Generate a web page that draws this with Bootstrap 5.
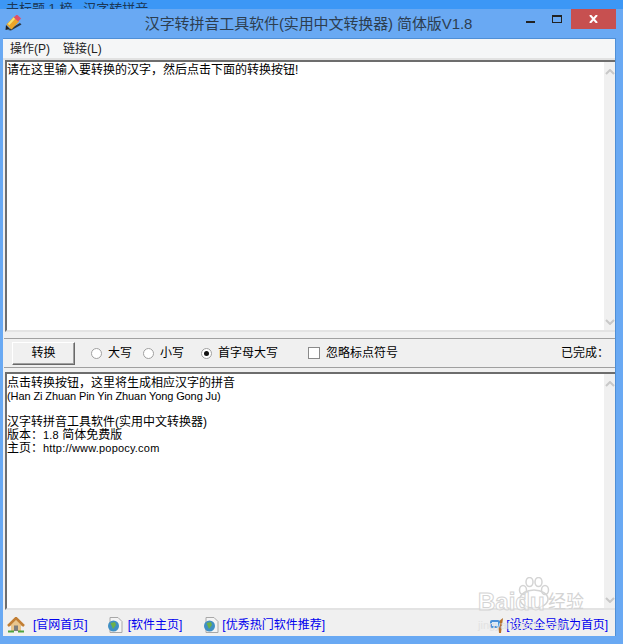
<!DOCTYPE html>
<html lang="zh-CN">
<head>
  <meta charset="UTF-8">
  <meta name="viewport" content="width=device-width, initial-scale=1.0">
  <title>汉字转拼音工具软件</title>
  <link href="https://cdn.jsdelivr.net/npm/bootstrap@5.3.2/dist/css/bootstrap.min.css" rel="stylesheet">
  <script defer src="https://cdn.jsdelivr.net/npm/bootstrap@5.3.2/dist/js/bootstrap.bundle.min.js"></script>
  <style>
    html, body { height: 100%; margin: 0; overflow: hidden; }
    body { background: #69a9f3; font-family: "Liberation Sans", "Noto Sans CJK SC", sans-serif; font-size: 12px; line-height: 13px; color: #000; }
    .app-frame { width: 623px; height: 644px; }
    .behind-strip { height: 9px; background: #3c97f6; overflow: hidden; font-size: 13px; line-height: 17px; color: #1c3857; padding-left: 6px; white-space: nowrap; }
    .title-row { height: 29px; position: relative; padding-right: 6px; }
    .title-text { font-size: 15px; letter-spacing: -.1px; color: #2d3e50; line-height: 29px; }
    .app-icon { position: absolute; left: 5px; top: 6px; }
    .win-btns { position: absolute; right: 7px; top: 0; height: 20px; }
    .close-btn { width: 45px; height: 20px; background: #c75050; }
    .ctl-btn { width: 27px; height: 20px; }
    .client-area { margin: 0 7px 0 3px; height: 598px; background: #f0f0f0; border-top: 1px solid #4f8fd6; border-right: 1px solid #4f8fd6; }
    .menu-row { height: 21px; background: #f5f6f7; padding-left: 7px; gap: 13px; line-height: 20px; color: #222; border-bottom: 2px solid #e2e2e2; }
    .edit-box { position: relative; background: #fff; margin-left: 2px; border-top: 2px solid #6d6d6d; border-left: 2px solid #6d6d6d; border-bottom: 2px solid #e3e3e3; overflow: hidden; }
    .edit-top { height: 272px; padding-top: 2px; }
    .edit-bottom { height: 238px; padding-top: 3px; }
    .latin-tight { font-size: 11px; letter-spacing: -.1px; }
    .latin-wide { font-size: 11px; letter-spacing: .2px; }
    .scroll-track { position: absolute; right: 0; top: 0; bottom: 0; width: 11px; background: #f0f0f0; }
    .scroll-arrow { position: absolute; right: 0; width: 10px; height: 6px; }
    .convert-bar { height: 30px; margin: 6px 0 4px 1px; border-top: 1px solid #a0a0a0; border-bottom: 1px solid #a0a0a0; padding: 0 6px 0 8px; }
    .convert-btn { width: 63px; height: 23px; background: #f0f0f0; border: 1px solid; border-color: #fff #696969 #696969 #fff; box-shadow: inset -1px -1px 0 #a0a0a0; text-align: center; line-height: 20px; padding: 0; color: #000; font-size: 12px; margin-right: 16px; }
    .radio-dot { width: 11px; height: 11px; border-radius: 50%; background: #fff; border: 1px solid #a0a0a0; margin-right: 6px; position: relative; flex: none; }
    .radio-dot.is-on::after { content: ""; position: absolute; left: 2px; top: 2px; width: 5px; height: 5px; border-radius: 50%; background: #111; }
    .check-box { width: 12px; height: 12px; background: #fff; border: 1px solid #8a8a8a; margin-right: 6px; flex: none; }
    .gap-a { margin-right: 11px; }
    .gap-b { margin-right: 17px; }
    .gap-c { margin-right: 30px; }
    .foot-row { height: 26px; background: #f0f0f0; padding: 4px 0 0 4px; }
    .foot-link { color: #0000ee; text-decoration: none; font-size: 12px; }
    .house-icon { margin-right: 8px; }
    .globe-one { margin-left: 19px; margin-right: 5px; }
    .globe-two { margin-left: 21px; margin-right: 3px; }
    .nav-icon { margin-left: auto; margin-right: 2px; }
    .foot-last { margin-right: 7px; letter-spacing: -.1px; }
    .watermark { position: absolute; left: 478px; top: 571px; width: 130px; height: 62px; pointer-events: none; color: #d6d6d6; }
    .wm-paw { position: absolute; left: 40px; top: 6px; }
    .wm-word { position: absolute; left: 0; top: 16px; font-size: 24px; line-height: 30px; font-weight: 700; color: rgba(255,255,255,.6); -webkit-text-stroke: 1px #d4d4d4; white-space: nowrap; }
    .wm-cn { position: absolute; left: 70px; top: 20px; font-size: 18px; line-height: 22px; color: #d4d4d4; white-space: nowrap; }
    .wm-url { position: absolute; left: 0; top: 48px; font-size: 11px; line-height: 12px; color: #e2e2e2; white-space: nowrap; }
  </style>
</head>
<body>
  <div class="app-frame position-relative">
    <div class="behind-strip">未标题 1.榜 &nbsp; 汉字转拼音</div>
    <div class="title-row d-flex align-items-center justify-content-center">
      <svg class="app-icon" width="17" height="16" viewBox="0 0 17 16">
        <path d="M3 15 L15 8 L16.5 9.5 L6 15.5 Z" fill="#1a1a1a" opacity=".8"/>
        <path d="M4 12 L11.5 4" stroke="#eda52a" stroke-width="7"/>
        <path d="M3.5 9.5 L9.5 3" stroke="#f8e070" stroke-width="2"/>
        <path d="M11 4.5 L14 1.5" stroke="#e0506a" stroke-width="6"/>
        <path d="M1 10 L5 14 L.5 15 Z" fill="#222"/>
      </svg>
      <span class="title-text">汉字转拼音工具软件(实用中文转换器) 简体版V1.8</span>
      <div class="win-btns d-flex">
        <div class="ctl-btn d-flex align-items-center justify-content-center">
          <svg width="9" height="9" viewBox="0 0 9 9"><rect y="6" width="9" height="2" fill="#222"/></svg>
        </div>
        <div class="ctl-btn d-flex align-items-center justify-content-center">
          <svg width="11" height="9" viewBox="0 0 11 9"><rect x=".5" y=".5" width="9" height="7" fill="none" stroke="#222"/><rect width="10" height="2" fill="#222"/></svg>
        </div>
        <div class="close-btn d-flex align-items-center justify-content-center">
          <svg width="9" height="8" viewBox="0 0 9 8"><path d="M1 0 L8 8 M8 0 L1 8" stroke="#fff" stroke-width="2"/></svg>
        </div>
      </div>
    </div>

    <div class="client-area d-flex flex-column">
      <div class="menu-row d-flex"><span>操作(P)</span><span>链接(L)</span></div>

      <div class="edit-box edit-top">
        请在这里输入要转换的汉字，然后点击下面的转换按钮!
        <div class="scroll-track">
          <svg class="scroll-arrow" style="top:7px" viewBox="0 0 10 6"><path d="M1 5 L5 1 L9 5" fill="none" stroke="#c8c8c8" stroke-width="2"/></svg>
          <svg class="scroll-arrow" style="bottom:5px" viewBox="0 0 10 6"><path d="M1 1 L5 5 L9 1" fill="none" stroke="#c8c8c8" stroke-width="2"/></svg>
        </div>
      </div>

      <div class="convert-bar d-flex align-items-center">
        <button type="button" class="convert-btn">转换</button>
        <span class="radio-dot"></span><span class="gap-a">大写</span>
        <span class="radio-dot"></span><span class="gap-b">小写</span>
        <span class="radio-dot is-on"></span><span class="gap-c">首字母大写</span>
        <span class="check-box"></span><span>忽略标点符号</span>
        <span class="ms-auto">已完成：</span>
      </div>

      <div class="edit-box edit-bottom">
        点击转换按钮，这里将生成相应汉字的拼音<br>
        <span class="latin-tight">(Han Zi Zhuan Pin Yin Zhuan Yong Gong Ju)</span><br><br>
        汉字转拼音工具软件(实用中文转换器)<br>
        版本：<span class="latin-wide">1.8</span> 简体免费版<br>
        主页：<span class="latin-wide">http://www.popocy.com</span>
        <div class="scroll-track">
          <svg class="scroll-arrow" style="top:7px" viewBox="0 0 10 6"><path d="M1 5 L5 1 L9 5" fill="none" stroke="#c8c8c8" stroke-width="2"/></svg>
          <svg class="scroll-arrow" style="bottom:5px" viewBox="0 0 10 6"><path d="M1 1 L5 5 L9 1" fill="none" stroke="#c8c8c8" stroke-width="2"/></svg>
        </div>
      </div>

      <div class="foot-row d-flex align-items-center">
        <svg class="house-icon" width="18" height="16" viewBox="0 0 18 16">
          <path d="M9 1 L17 9 H14 V14 H4 V9 H1 Z" fill="#e9c58d"/>
          <path d="M1 9 L9 1 L17 9" fill="none" stroke="#c27f35" stroke-width="2.5"/>
          <rect x="7" y="8.5" width="4" height="5.5" fill="#7d7d7d"/>
          <rect x="1" y="13.5" width="6" height="2" fill="#4fa33f"/>
          <rect x="11" y="13.5" width="6" height="2" fill="#4fa33f"/>
        </svg>
        <a class="foot-link" href="#">[官网首页]</a>
        <svg class="globe-one" width="16" height="16" viewBox="0 0 16 16">
          <path d="M3 .5 H11 L15 4.5 V15.5 H3 Z" fill="#f4f4f4" stroke="#a8a8a8"/>
          <circle cx="6.5" cy="9" r="5.5" fill="#3f8fc4"/>
          <path d="M3.5 6 L8 5 L9 8 L6 12 Z" fill="#6cb04a"/>
        </svg>
        <a class="foot-link" href="#">[软件主页]</a>
        <svg class="globe-two" width="16" height="16" viewBox="0 0 16 16">
          <path d="M3 .5 H11 L15 4.5 V15.5 H3 Z" fill="#f4f4f4" stroke="#a8a8a8"/>
          <circle cx="6.5" cy="9" r="5.5" fill="#3f8fc4"/>
          <path d="M3.5 6 L8 5 L9 8 L6 12 Z" fill="#6cb04a"/>
        </svg>
        <a class="foot-link" href="#">[优秀热门软件推荐]</a>
        <svg class="nav-icon" width="14" height="16" viewBox="0 0 14 16">
          <path d="M8 5 L13 1 L11 16 H9 Z" fill="#b5702a"/>
          <rect x="0" y="3" width="10" height="8" rx="2" fill="#4a90d9"/>
          <rect x="2" y="5" width="6" height="4" fill="#dcecfa"/>
        </svg>
        <a class="foot-link foot-last" href="#">[设安全导航为首页]</a>
      </div>
    </div>
    <div class="watermark">
      <svg class="wm-paw" width="32" height="32" viewBox="0 0 32 32">
        <g fill="none" stroke="#d4d4d4" stroke-width="1.5">
          <ellipse cx="5" cy="13" rx="3.5" ry="4.5"/>
          <ellipse cx="11.5" cy="5" rx="3.5" ry="4.5"/>
          <ellipse cx="20.5" cy="5" rx="3.5" ry="4.5"/>
          <ellipse cx="27" cy="13" rx="3.5" ry="4.5"/>
          <ellipse cx="16" cy="22" rx="14" ry="9"/>
        </g>
      </svg>
      <span class="wm-word">Baidu</span>
      <span class="wm-cn">经验</span>
      <span class="wm-url">jingyan.baidu.com</span>
    </div>
  </div>
</body>
</html>
